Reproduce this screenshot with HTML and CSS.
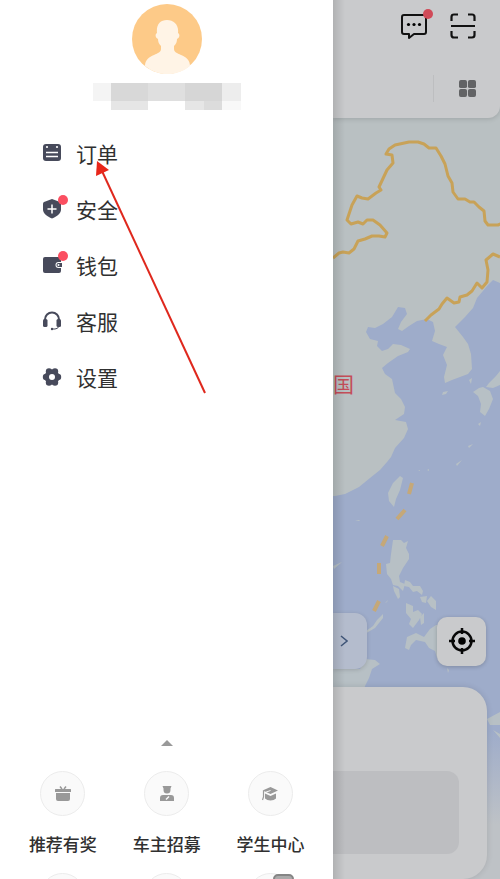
FILE: index.html
```html
<!DOCTYPE html>
<html lang="zh-CN">
<head>
  <meta charset="UTF-8">
  <meta name="viewport" content="width=device-width, initial-scale=1.0">
  <title>个人中心</title>
  <link rel="stylesheet" href="styles.css">
</head>
<body>
  <div class="app">
    <aside class="drawer">
      <header class="profile">
        <svg class="avatar" viewBox="0 0 70 70">
          <circle cx="35" cy="35" r="35" fill="#fdca88"/>
          <path d="M13 62c0-6 4-9 9-11 4-2 7-3 7-6v-3c-2-2-3-4-3-7-3-1-3-5-1-6-1-8 3-13 10-13s12 5 11 13c2 1 2 5-1 6 0 3-1 5-3 7v3c0 3 3 4 7 6 5 2 9 5 9 11a35 35 0 0 1-45 0z" fill="#fff4e6"/>
        </svg>
        <svg class="masked-name" viewBox="0 0 148 27">
          <path d="M0 0h18v18H0z" fill="#f4f4f4"/>
          <path d="M18 0h37v18H18z" fill="#d8d8d8"/>
          <path d="M55 0h37v18H55z" fill="#dfdfdf"/>
          <path d="M92 0h37v18H92z" fill="#d6d6d6"/>
          <path d="M129 0h19v18h-19z" fill="#ededed"/>
          <path d="M18 18h37v9H18zM92 18h19v9H92z" fill="#e6e6e6"/>
          <path d="M111 18h18v9h-18z" fill="#dcdcdc"/>
          <path d="M129 18h19v9h-19z" fill="#f8f8f8"/>
        </svg>
      </header>

      <nav class="menu">
        <a class="menu-item" href="#orders">
          <span class="menu-icon">
            <svg viewBox="0 0 20 20">
              <path d="M1 4a3 3 0 0 1 3-3h12a3 3 0 0 1 3 3v11a3 3 0 0 1-3 3H4a3 3 0 0 1-3-3z" fill="#474a5b"/>
              <path d="M4 9.5h12M4 13.500h12" stroke="#fff" stroke-width="1.300"/>
              <circle cx="5" cy="4" r="1.100" fill="#fff"/>
              <circle cx="15" cy="4" r="1.100" fill="#fff"/>
            </svg>
          </span>
          订单
        </a>
        <a class="menu-item" href="#safety">
          <span class="menu-icon">
            <svg viewBox="0 0 20 20">
              <path d="M10 0l8 3q1 .5 1 1.500v6c0 4-4 7-9 9-5-2-9-5-9-9v-6Q1 3.500 2 3z" fill="#474a5b"/>
              <path d="M5.500 10h9M10 5.500v9" stroke="#fff" stroke-width="1.500"/>
            </svg>
            <i class="dot"></i>
          </span>
          安全
        </a>
        <a class="menu-item" href="#wallet">
          <span class="menu-icon">
            <svg viewBox="0 0 20 20">
              <path d="M1 4q0-2 2-2h14q2 0 2 2v12q0 2-2 2H3q-2 0-2-2z" fill="#474a5b"/>
              <path d="M20 7h-3.500a3 3 0 0 0 0 6H20z" fill="#fff"/>
              <path d="M20 8h-3.500a2 2 0 0 0 0 4H20z" fill="#474a5b"/>
              <circle cx="16.500" cy="10" r="1" fill="#fff"/>
            </svg>
            <i class="dot"></i>
          </span>
          钱包
        </a>
        <a class="menu-item" href="#service">
          <span class="menu-icon">
            <svg viewBox="0 0 20 20">
              <path d="M3 11V8.500a7 7 0 0 1 14 0V11" fill="none" stroke="#474a5b" stroke-width="2"/>
              <rect x="1" y="8" width="4.500" height="8" rx="1.500" fill="#474a5b"/>
              <rect x="14.500" y="8" width="4.500" height="8" rx="1.500" fill="#474a5b"/>
              <path d="M17 15q-1 3-4 3h-3" fill="none" stroke="#474a5b" stroke-width="1"/>
              <circle cx="10" cy="18" r="1.200" fill="#474a5b"/>
            </svg>
          </span>
          客服
        </a>
        <a class="menu-item" href="#settings">
          <span class="menu-icon">
            <svg viewBox="0 0 20 20">
              <g fill="#474a5b">
                <circle cx="10" cy="10" r="7.500"/>
                <circle cx="4" cy="10" r="3.200"/><circle cx="16" cy="10" r="3.200"/>
                <circle cx="7" cy="4.500" r="3.200"/><circle cx="13" cy="4.500" r="3.200"/>
                <circle cx="7" cy="15.500" r="3.200"/><circle cx="13" cy="15.500" r="3.200"/>
              </g>
              <circle cx="10" cy="10" r="3" fill="#fff"/>
            </svg>
          </span>
          设置
        </a>
      </nav>

      <button class="expand" type="button" aria-label="展开">
        <svg viewBox="0 0 12 6"><path d="M0 6l6-6 6 6z" fill="#999"/></svg>
      </button>

      <div class="services">
        <a class="service" href="#refer">
          <span class="service-icon">
            <svg viewBox="0 0 16 16">
              <path d="M0 3.500Q0 3 .5 3h15q.5 0 .5.500V6H0zM1 7h14v6q0 2-2 2H3q-2 0-2-2z" fill="#999"/>
              <path d="M7 3L5 .500M9 3l2-2.500" stroke="#999" stroke-width="1.500"/>
            </svg>
          </span>
          推荐有奖
        </a>
        <a class="service" href="#drivers">
          <span class="service-icon">
            <svg viewBox="0 0 16 16">
              <path d="M3.500 0h9l-1 2.500V4a3.500 3.500 0 0 1-7 0V2.500zM1 15v-3q0-3 3-3h8q3 0 3 3v3z" fill="#999"/>
              <path d="M7 13.500l3-3" stroke="#fafafa" stroke-width="1.500"/>
            </svg>
          </span>
          车主招募
        </a>
        <a class="service" href="#students">
          <span class="service-icon">
            <svg viewBox="0 0 16 16">
              <path d="M8.500 1L16 4.500 8.500 8 .500 4.500zM3 7.500l5.500 2.500L14 7.500v5q-2 2-5.500 2T3 12.500z" fill="#999"/>
              <path d="M8.500 4.500L3 6.500" stroke="#fafafa" stroke-width="1"/>
              <path d="M1.500 5v6L.500 14" fill="none" stroke="#999" stroke-width="1.200"/>
            </svg>
          </span>
          学生中心
        </a>
        <a class="service" href="#more-1" aria-label="更多"><span class="service-icon"></span></a>
        <a class="service" href="#more-2" aria-label="更多"><span class="service-icon"></span></a>
        <a class="service" href="#more-3" aria-label="更多"><span class="service-icon"><b class="tag"></b></span></a>
      </div>
    </aside>

    <main class="home">
      <svg class="map" viewBox="333 0 167 879" preserveAspectRatio="xMinYMin slice">
        <defs>
          <linearGradient id="fade" x1="0" y1="0" x2="0" y2="1">
            <stop offset="0" stop-color="#bec2c6" stop-opacity="0"/>
            <stop offset="1" stop-color="#bec2c6"/>
          </linearGradient>
        </defs>
        <rect x="333" width="167" height="879" fill="#b9c0c2"/>
        <path class="sea" d="M500 283l-7-3-5 5-11 13-4 10-8 9-10 10 8 10 5 7 3 10 1 15-4 5-8 3-8 3-7 3-1-6 3-12-4-10 4-8-8-3-7-3 3-10-2-9-6-3-10 2-8 5-7 5-4-2 3-7 6-8-2-6-7-1-6 10-9 7-8 4-7-1-2 5 4 7 8 2-1 5 5 5 6-2 5-5 8 1 9 4-2 3-10 4-10 7-6 5 3 6 7 5 3 14 6 6 4 8-1 7-9 6 11 2 2 7-4 9-9 10-4 9-4 5-7 8-10 8-11 9-14 7-10 2H333V879h167z"/>
        <!-- islands -->
        <g class="land">
          <path d="M400 476l3 2-3 12-4 9-2 8-5-6-1-8 5-10z"/>
          <path d="M500 371l-4 5-7 7-3 4 7 1 7-3zM483 387l7 4 3 8-4 10-4 7-5-4 1-8-3-8-5-4 6-4z"/>
          <path d="M443 392l5-1-2 3-4 1zM469 380l3-2-1 6zM478 424l3-2-1 4zM468 446l5-2-4 4zM456 464l6-4-5 6zM427 470l2-1v2zM418 471l2-1v1zM355 520l5 0-1 1zM333 566l9-4-8 7z"/>
          <path d="M393 540l8 0 3 3 4-2-2 7 3 6 0 5-6 9-4 8 1 6 5 2-2 7-5-5-5-1-2-6-4-5-1-10 4-1 1-9z"/>
          <path d="M393 586l6 3 1 8-2 2-4-8zM405 580l5 2 3 4 7 0 3 5-1 4-5-4-4 1-4-5-5-1zM420 597l7-1-1 7-4-1zM431 596l5 5 0 9-5-3-4-6zM406 603l7 3 0 6 5-2 4 4-3 6-6 8-4-4 2-5-5-6zM420 617l4-4 0 10-3 2zM388 600l-3 3 2-1z"/>
          <path d="M383 614l-6 6-4 6-7 5-3 4 12-7 8-10z"/>
          <path d="M405 648l2-11 9-4 8 4 6-8 6-4h12v34l-11-1-2-7-6-3-4-6-9-2-5 5-2 5z"/>
          <path d="M333 669h27l5-10 10 1 5 4-8 5-3 9-4 8-1 6h-31z"/>
          <path d="M500 712l-13 7 3 6 10 0zM493 730l7 4v4zM447 668l2 2-1 3z"/>
        </g>
        <rect x="333" y="730" width="167" height="95" fill="url(#fade)"/>
        <rect x="333" y="824" width="167" height="55" fill="#bec2c6"/>
        <path class="border" d="M333 258l6-5 4-1 6 1 5-4 4-8 7-2 7-3 7 0 6 1 2-4-7-8-7-5-6 0-4 4-5-2-7 2-4-4 5-15 5-9 5 2 6 1 8-6 5-3-2-3 8-17 6-7-1-8-6-1 3-5 6-4 14-3 9 0 6 2 5 4 7 0 5 8 4 8 3 12 4 7 1 9 5 7 7 0 5 3 4 0 5 5 5 4 1 10 3 4 10 0 5-2"/>
        <path class="border" d="M500 257l-7-3-7 6 2 10-1 12-5 6-5-5-5 8-5 4-7 2-1 5-5 1-7-5-5 6-3 5-8 6-6 6"/>
        <path class="dashes" d="M412 483l-3 11M405 510l-8 9M387 536l-5 10M379 563v11M379 601l-5 10"/>
        <text class="country" x="333" y="392">国</text>
      </svg>

      <header class="topbar">
        <div class="tools">
          <button class="tool" type="button" aria-label="消息">
            <svg viewBox="0 0 26 26">
              <path d="M3 2h20q2 0 2 2v15q0 2-2 2H13l-5 4v-4H3q-2 0-2-2V4q0-2 2-2z" fill="none" stroke="#111" stroke-width="2" stroke-linejoin="round"/>
              <circle cx="7.500" cy="11.500" r="1.600"/><circle cx="13" cy="11.500" r="1.600"/><circle cx="18.500" cy="11.500" r="1.600"/>
            </svg>
            <i class="dot"></i>
          </button>
          <button class="tool" type="button" aria-label="扫一扫">
            <svg viewBox="0 0 26 26">
              <path d="M1.500 8V4q0-2.500 2.500-2.500h4M18 1.500h4q2.500 0 2.500 2.500v4M24.500 18v4q0 2.500-2.500 2.500h-4M8 24.500H4q-2.500 0-2.500-2.500v-4M1 13h24" fill="none" stroke="#111" stroke-width="2.200"/>
            </svg>
          </button>
        </div>
        <div class="categories">
          <button class="grid-button" type="button" aria-label="全部">
            <svg viewBox="0 0 18 18" fill="#626365">
              <rect x="0" y="0" width="8.500" height="8.500" rx="2"/><rect x="9.500" y="0" width="8.500" height="8.500" rx="2"/>
              <rect x="0" y="9.500" width="8.500" height="8.500" rx="2"/><rect x="9.500" y="9.500" width="8.500" height="8.500" rx="2"/>
            </svg>
          </button>
        </div>
      </header>

      <div class="map-actions">
        <button class="next" type="button" aria-label="展开提示">
          <svg viewBox="0 0 8 12"><path d="M1 1l6 5-6 5" fill="none" stroke="#405679" stroke-width="1.500"/></svg>
        </button>
        <button class="locate" type="button" aria-label="定位">
          <svg viewBox="0 0 26 26">
            <circle cx="13" cy="13" r="9.500" fill="none" stroke="#080808" stroke-width="2.500"/>
            <circle cx="13" cy="13" r="3.800"/>
            <path d="M13 0v6M13 20v6M0 13h6M20 13h6" stroke="#080808" stroke-width="2.500"/>
          </svg>
        </button>
      </div>

      <section class="sheet">
        <div class="sheet-box"></div>
      </section>
    </main>

    <svg class="pointer" viewBox="0 0 112 234">
      <path d="M6 10l103 222" stroke="#df281d" stroke-width="2"/>
      <path d="M1 0l-1 15 13-6z" fill="#e8261a"/>
    </svg>
  </div>
</body>
</html>
```

FILE: styles.css
```css
* {
  box-sizing: border-box;
}
body {
  margin: 0;
  font-family: "Noto Sans CJK SC", sans-serif;
  color: #303030;
  background-color: #fff;
}
button {
  padding: 0;
  border: none;
  background: none;
}
a {
  color: inherit;
  text-decoration: none;
}
svg {
  display: block;
}
.app {
  position: relative;
  display: flex;
  height: 100vh;
  overflow: hidden;
}

/* Side drawer */
.drawer {
  flex: 2;
  display: flex;
  flex-direction: column;
  min-width: 0;
  padding-top: 4px;
  background-color: #fff;
}
.profile {
  display: flex;
  flex-direction: column;
  align-items: center;
  gap: 9px;
}
.avatar {
  width: 70px;
  height: 70px;
}
.masked-name {
  width: 148px;
  height: 27px;
}
.menu {
  display: flex;
  flex-direction: column;
  padding: 15px 0 0 42px;
}
.menu-item {
  display: flex;
  align-items: center;
  gap: 14px;
  height: 56px;
  font-size: 21px;
}
.menu-icon {
  position: relative;
  width: 20px;
  height: 20px;
}
.dot {
  position: absolute;
  top: -4px;
  right: -6px;
  width: 10px;
  height: 10px;
  border-radius: 50%;
  background-color: #fb4f61;
}
.expand {
  width: 12px;
  margin: auto auto 25px;
}
.services {
  flex: none;
  display: grid;
  grid-template-columns: repeat(3, 1fr);
  row-gap: 17px;
  height: 108px;
  padding: 0 11px;
}
.service {
  display: flex;
  flex-direction: column;
  align-items: center;
  gap: 16px;
  font-size: 17px;
  font-weight: 500;
  line-height: 24px;
  white-space: nowrap;
}
.service-icon {
  position: relative;
  display: flex;
  align-items: center;
  justify-content: center;
  width: 45px;
  height: 45px;
  border: 1px solid #ececec;
  border-radius: 50%;
  background-color: #fafafa;
}
.service-icon svg {
  width: 16px;
  height: 16px;
}
.tag {
  position: absolute;
  top: 0;
  left: 24px;
  width: 21px;
  height: 14px;
  border: 2px solid #858585;
  border-radius: 5px;
  background-color: #aaa;
}

/* Dimmed home screen */
.home {
  flex: 1;
  position: relative;
  display: flex;
  flex-direction: column;
  min-width: 0;
  overflow: hidden;
}
.home::after {
  content: "";
  position: absolute;
  inset: 0 auto 0 0;
  width: 12px;
  background: linear-gradient(to right, rgba(0, 0, 0, 0.12), transparent);
}
.map {
  position: absolute;
  inset: 0;
  width: 100%;
  height: 100%;
}
.sea {
  fill: #9eacca;
}
.land {
  fill: #b7c0c5;
}
.border {
  fill: none;
  stroke: #c8a258;
  stroke-width: 3;
  stroke-linejoin: round;
}
.dashes {
  fill: none;
  stroke: #c5a878;
  stroke-width: 4;
}
.country {
  font-size: 21px;
  fill: #c44d59;
}
.topbar {
  position: relative;
  height: 118px;
  padding: 13px 24px 0 0;
  border-radius: 0 0 12px 0;
  background-color: #c9cacc;
  box-shadow: 0 1px 5px rgba(0, 0, 0, 0.15);
}
.tools {
  display: flex;
  justify-content: flex-end;
  gap: 23px;
}
.tool {
  position: relative;
  width: 26px;
  height: 26px;
}
.tool .dot {
  background-color: #d04a58;
}
.categories {
  display: flex;
  justify-content: flex-end;
  margin-top: 36px;
}
.grid-button {
  padding: 5px 0 5px 25px;
  border-left: 1px solid #bdbec0;
}
.grid-button svg {
  width: 17px;
  height: 17px;
}
.map-actions {
  position: relative;
  display: flex;
  align-items: center;
  justify-content: space-between;
  margin-top: auto;
  padding-right: 14px;
}
.next {
  display: flex;
  align-items: center;
  width: 34px;
  height: 56px;
  padding-left: 7px;
  border-radius: 0 12px 12px 0;
  background-color: #b4bccd;
  box-shadow: 0 1px 4px rgba(0, 0, 0, 0.15);
}
.next svg {
  width: 8px;
  height: 12px;
}
.locate {
  display: flex;
  align-items: center;
  justify-content: center;
  width: 49px;
  height: 49px;
  border-radius: 10px;
  background-color: #c9cacc;
  box-shadow: 0 1px 4px rgba(0, 0, 0, 0.2);
}
.locate svg {
  width: 26px;
  height: 26px;
}
.sheet {
  position: relative;
  margin: 18px 13px 0 0;
  padding: 84px 28px 25px 0;
  border-radius: 0 24px 24px 0;
  background-color: #c9cacc;
  box-shadow: 0 0 6px rgba(0, 0, 0, 0.12);
}
.sheet-box {
  height: 83px;
  border-radius: 0 12px 12px 0;
  background-color: #bdbec1;
}

/* Arrow to the orders entry */
.pointer {
  position: absolute;
  top: 161px;
  left: 96px;
  width: 112px;
  height: 234px;
}
```
